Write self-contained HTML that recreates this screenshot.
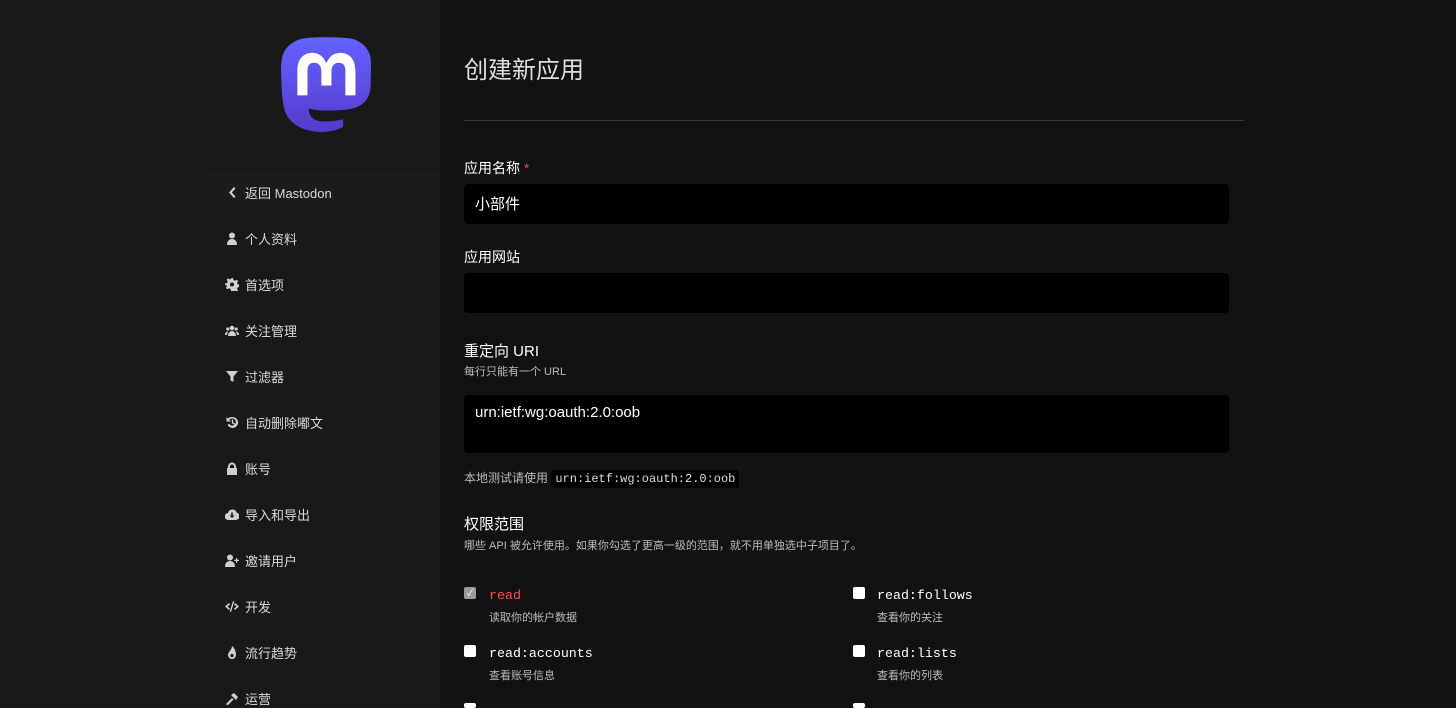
<!DOCTYPE html>
<html><head><meta charset="utf-8"><style>
*{box-sizing:border-box;margin:0;padding:0}
html{width:1456px;height:708px;overflow:hidden}
body{width:1456px;height:708px;overflow:hidden;background:#121212;font-family:"Liberation Sans","Noto Sans CJK SC",sans-serif;color:#fff;position:relative}
.side{position:absolute;left:0;top:0;width:440px;height:708px;background:#191919}
.logo{position:absolute;left:281px;top:37px}
.nav{position:absolute;left:208px;width:232px;height:46px;font-size:13px;color:#d9d9d9}
.nav span{position:absolute;left:37px;top:13px}
.nav svg{position:absolute;left:17px;top:16px;width:14px;height:13px;fill:#d0d0d0}
h1{position:absolute;left:464px;top:50px;font-size:24px;font-weight:400;color:#ddd}
.hr{position:absolute;left:464px;top:120px;width:780px;height:1px;background:#393939}
.lbl{position:absolute;left:464px;font-size:14px;color:#fff}
.hint{position:absolute;left:464px;font-size:11px;color:#bbb}
.inp{position:absolute;left:464px;width:765px;background:#000;border-radius:4px;font-size:15px;color:#fff;padding:9px 11px}
.mono{font-family:"Liberation Mono",monospace}
.cb{position:absolute;width:12px;height:12px;background:#fff;border-radius:2px}
.sc{position:absolute;font-size:13.3px;font-weight:normal}
.sd{position:absolute;font-size:11px;color:#bbb}
</style></head><body>
<div class="side"></div>
<svg class="logo" width="90" height="96" viewBox="0 0 74 79"><defs><linearGradient id="g" x1="0" y1="0" x2="0" y2="1"><stop offset="0" stop-color="#6364ff"/><stop offset="1" stop-color="#563acc"/></linearGradient></defs>
<path fill="url(#g)" d="M73.7 17.43C72.56 9.05 65.18 2.45 56.42 1.17 54.95.95 49.35.16 36.39.16h-.1C23.33.16 20.550.95 19.07 1.17 10.56 2.41 2.79 8.35.9 16.83 0 21 -.1 25.63.07 29.88c.24 6.090.28 12.17.84 18.24.39 4.03 1.06 8.030 2.02 11.96 1.79 7.27 9.05 13.31 16.16 15.78 7.61 2.57 15.79 3 23.63 1.23.86-.2 1.72-.43 2.56-.69 1.9-.6 4.14-1.27 5.78-2.45.02-.02.07-.08.07-.14v-5.88c0-.1-.12-.19-.21-.17-5.03 1.19-10.17 1.78-15.34 1.77-8.89 0-11.28-4.17-11.97-5.910-.55-1.5-.9-3.07-1.04-4.66 0-.1.12-.2.22-.17 4.94 1.18 10 1.77 15.09 1.77 1.22 0 2.44 0 3.66-.03 5.11-.14 10.5-.4 15.53-1.37.13-.02.25-.05.36-.08 7.93-1.51 15.48-6.25 16.25-18.27.03-.47.1-4.95.1-5.44 0-1.67.54-11.87-.08-17.95z"/>
<path fill="#fff" d="M61.25 27.07V48h-8.32V27.69c0-4.28-1.79-6.46-5.44-6.46-4.01 0-6.01 2.57-6.01 7.64v11.06h-8.27V28.87c0-5.07-2.01-7.64-6.02-7.640-3.62 0-5.43 2.18-5.43 6.46V48h-8.31V27.07c0-4.28 1.09-7.68 3.28-10.2 2.25-2.52 5.21-3.81 8.87-3.81 4.25 0 7.46 1.63 9.59 4.88l2.07 3.46 2.07-3.46c2.13-3.26 5.34-4.88 9.58-4.88 3.66 0 6.62 1.29 8.87 3.81 2.18 2.52 3.28 5.92 3.28 10.2z"/></svg>

<div class="nav" style="top:170px;background:#1c1c1c"><svg viewBox="0 0 14 13"><path d="M9 1 4 6.5 9 12l1.5-1.4L6.8 6.5l3.7-4.1z"/></svg><span>返回 Mastodon</span></div>
<div class="nav" style="top:216px"><svg viewBox="0 0 14 13"><circle cx="7" cy="3.5" r="3"/><path d="M2 13c0-4 2-6 5-6s5 2 5 6z"/></svg><span>个人资料</span></div>
<div class="nav" style="top:262px"><svg viewBox="0 0 14 13"><path d="M6 0h2l.4 2 1.6.8 1.7-1.1 1.4 1.4-1.1 1.7.8 1.6 2 .4v2l-2 .4-.8 1.6 1.1 1.7-1.4 1.4-1.7-1.1-1.6.8L8 13H6l-.4-2-1.6-.8-1.7 1.1-1.4-1.4 1.1-1.7-.8-1.6L0 7.5v-2l2-.4.8-1.6L1.7 1.8 3.1.4l1.7 1.1L6.4.7z"/><circle cx="7" cy="6.5" r="2" fill="#191919"/></svg><span>首选项</span></div>
<div class="nav" style="top:308px"><svg viewBox="0 0 14 13"><circle cx="7" cy="4" r="2.3"/><circle cx="2.8" cy="5" r="1.6"/><circle cx="11.2" cy="5" r="1.6"/><path d="M3 12c0-3 2-5 4-5s4 2 4 5zM0 11c0-2 1-3.5 3-3.5l-1 3.5zM14 11c0-2-1-3.5-3-3.5l1 3.5z"/></svg><span>关注管理</span></div>
<div class="nav" style="top:354px"><svg viewBox="0 0 14 13"><path d="M1 1h12L8.5 6.5V12l-3-1.5v-4z"/></svg><span>过滤器</span></div>
<div class="nav" style="top:400px"><svg viewBox="0 0 14 13"><path d="M7.5 1a5.5 5.5 0 1 1-5 7.6l1.7-.7A3.6 3.6 0 1 0 4.3 4L6 5.5H1.5V1l1.5 1.5A5.5 5.5 0 0 1 7.5 1zM6.8 3.5h1.4v3l2 1.3-.7 1.1-2.7-1.7z"/></svg><span>自动删除嘟文</span></div>
<div class="nav" style="top:446px"><svg viewBox="0 0 14 13"><path d="M3 6V4.5a4 4 0 0 1 8 0V6h1v7H2V6zm2 0h4V4.5a2 2 0 0 0-4 0z"/></svg><span>账号</span></div>
<div class="nav" style="top:492px"><svg viewBox="0 0 14 13"><path d="M3.5 12A3.5 3.5 0 0 1 3 5a4.5 4.5 0 0 1 8.6-.5A3.8 3.8 0 0 1 11 12z"/><path d="M6.2 4.5h1.6v3h1.7L7 10 4.5 7.5h1.7z" fill="#191919"/></svg><span>导入和导出</span></div>
<div class="nav" style="top:538px"><svg viewBox="0 0 14 13"><circle cx="5" cy="3.5" r="3"/><path d="M0 13c0-4 2-6 5-6s5 2 5 6zM11 4h1.2v1.8H14V7h-1.8v1.8H11V7H9.2V5.8H11z"/></svg><span>邀请用户</span></div>
<div class="nav" style="top:584px"><svg viewBox="0 0 14 13"><path d="M4 3 0 6.5 4 10l1-1.2-2.5-2.3L5 4.2zM10 3l4 3.5-4 3.5-1-1.2 2.5-2.3L9 4.2zM8 1l1.3.4L6 12l-1.3-.4z"/></svg><span>开发</span></div>
<div class="nav" style="top:630px"><svg viewBox="0 0 14 13"><path d="M7 13a4 4 0 0 1-4-4c0-2 1.5-3.5 2.5-5C6.5 2.5 7 1 7 0c2 1.5 4 4.5 4 9a4 4 0 0 1-4 4z"/><circle cx="7" cy="9.5" r="1.6" fill="#191919"/></svg><span>流行趋势</span></div>
<div class="nav" style="top:676px"><svg viewBox="0 0 14 13"><path d="M1 12l6-6 1.5 1.5-6 6zM6 3l3-2 4 4-2 3z"/></svg><span>运营</span></div>

<h1>创建新应用</h1>
<div class="hr"></div>
<div class="lbl" style="top:158px">应用名称 <span style="color:#df405a">*</span></div>
<div class="inp" style="top:184px;height:40px">小部件</div>
<div class="lbl" style="top:247px">应用网站</div>
<div class="inp" style="top:273px;height:40px"></div>
<div class="lbl" style="top:340px;font-size:15px">重定向 URI</div>
<div class="hint" style="top:363px">每行只能有一个 URL</div>
<div class="inp" style="top:395px;height:58px;padding-top:9px">urn:ietf:wg:oauth:2.0:oob</div>
<div class="hint" style="top:469px;font-size:12px">本地测试请使用 <span class="mono" style="background:#000;color:#ddd;padding:2px 4px;border-radius:3px">urn:ietf:wg:oauth:2.0:oob</span></div>
<div class="lbl" style="top:513px;font-size:15px">权限范围</div>
<div class="hint" style="top:537px">哪些 API 被允许使用。如果你勾选了更高一级的范围，就不用单独选中子项目了。</div>

<div class="cb" style="left:464px;top:587px;background:#9a9a9a;font-size:9px;color:#fff;text-align:center;line-height:12px">✓</div>
<div class="sc mono" style="left:489px;top:588px;color:#ff5050">read</div>
<div class="sd" style="left:489px;top:609px">读取你的帐户数据</div>
<div class="cb" style="left:853px;top:587px"></div>
<div class="sc mono" style="left:877px;top:588px">read:follows</div>
<div class="sd" style="left:877px;top:609px">查看你的关注</div>
<div class="cb" style="left:464px;top:645px"></div>
<div class="sc mono" style="left:489px;top:646px">read:accounts</div>
<div class="sd" style="left:489px;top:667px">查看账号信息</div>
<div class="cb" style="left:853px;top:645px"></div>
<div class="sc mono" style="left:877px;top:646px">read:lists</div>
<div class="sd" style="left:877px;top:667px">查看你的列表</div>
<div class="cb" style="left:464px;top:703px;height:5px"></div>
<div class="cb" style="left:853px;top:703px;height:5px"></div>
</body></html>
